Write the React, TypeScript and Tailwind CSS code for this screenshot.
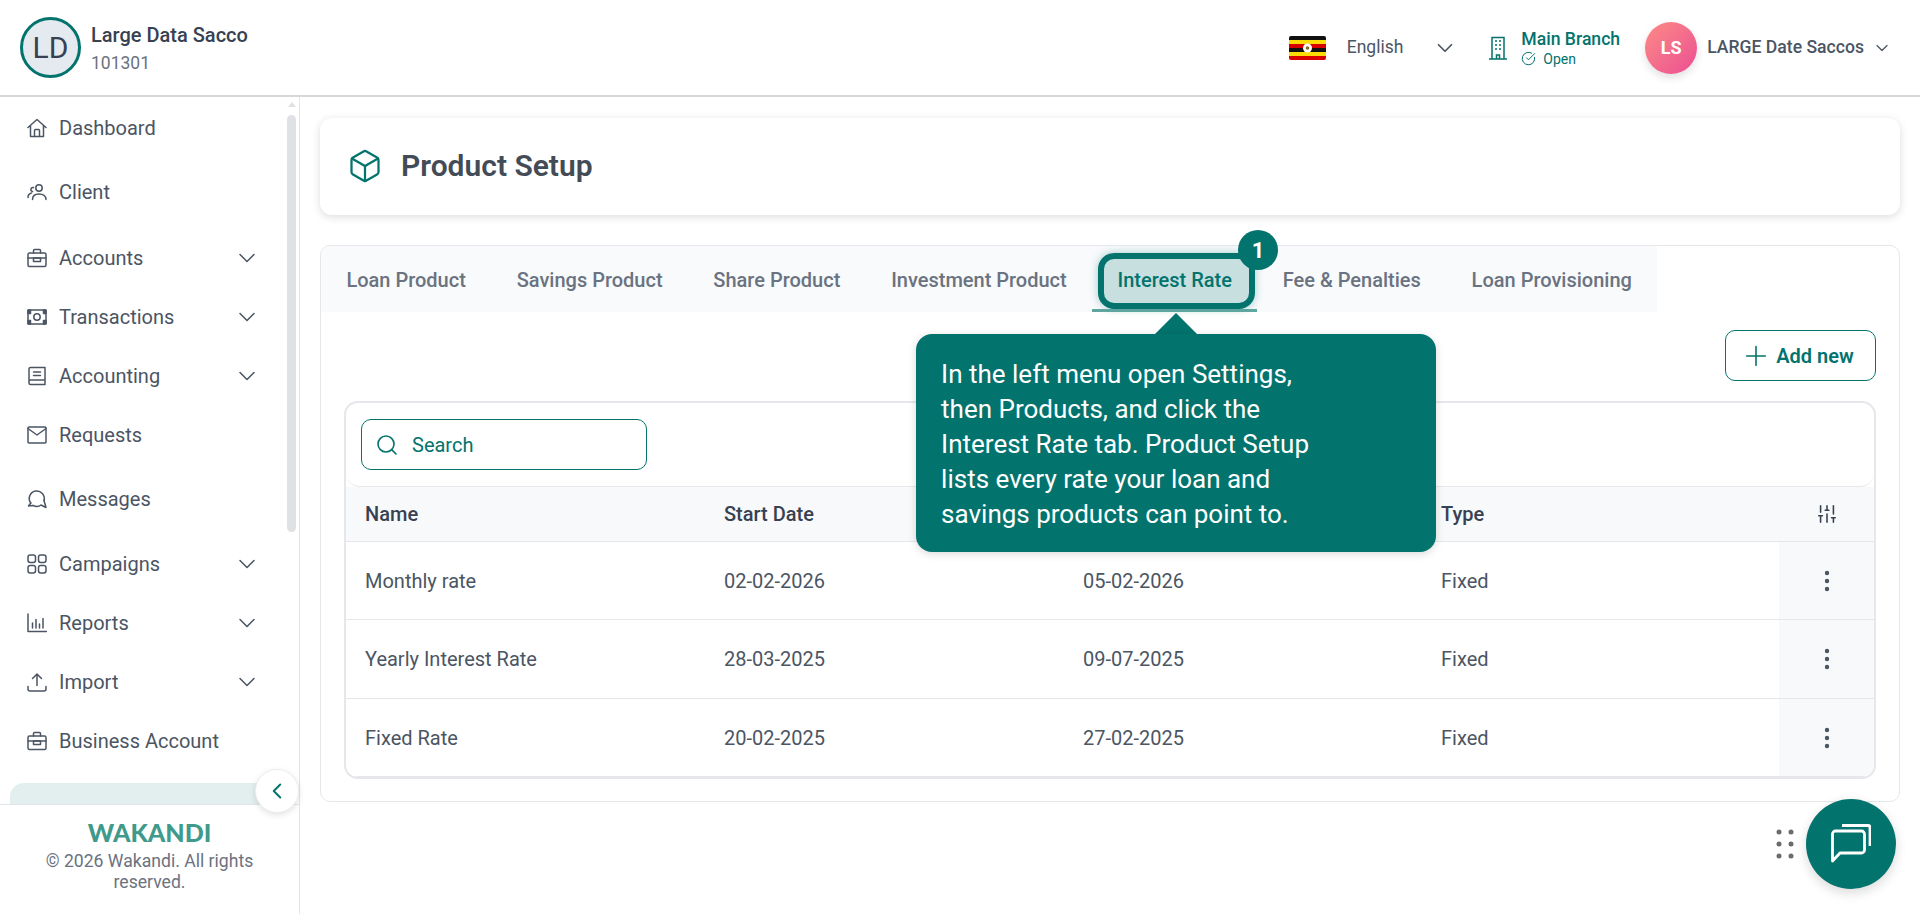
import type { ReactNode } from 'react'
import { ChevronDown, ChevronLeft, CircleCheckBig, Box, Plus, Search, SlidersVertical } from 'lucide-react'

function NavIcon({ children }: { children: ReactNode }) {
  return (
    <svg width="20" height="20" viewBox="0 0 20 20" fill="none" stroke="currentColor" strokeWidth="1.5" strokeLinejoin="round" strokeLinecap="round">
      {children}
    </svg>
  )
}

const briefcase = (
  <NavIcon>
    <rect x="1" y="5" width="18" height="13.500" rx="1.500" />
    <path d="M6.500 5V2.500a1 1 0 0 1 1-1h5a1 1 0 0 1 1 1V5M1 10h18" />
    <rect x="6.500" y="10" width="7" height="3.500" />
  </NavIcon>
)

const navItems = [
  {
    label: 'Dashboard',
    cls: 'h-[64px]',
    icon: (
      <NavIcon>
        <path d="M1 9.500 10 1.500l9 8M3.500 8v10.500h13V8" />
        <path d="M7.500 18.500v-6a1 1 0 0 1 1-1h3a1 1 0 0 1 1 1v6" />
      </NavIcon>
    ),
  },
  {
    label: 'Client',
    cls: 'h-[64px]',
    icon: (
      <NavIcon>
        <circle cx="12" cy="6" r="3.200" />
        <path d="M5.500 17.500c0-3.500 2.500-5.500 6.500-5.500s7 2 7 5.500" />
        <path d="M6.500 5.500a2 2 0 1 0-1 4M1 15.500c0-2.500 1-4 3.500-4.500" />
      </NavIcon>
    ),
  },
  { label: 'Accounts', cls: 'mt-[4px] h-[59px]', more: true, icon: briefcase },
  {
    label: 'Transactions',
    cls: 'h-[59px]',
    more: true,
    icon: (
      <NavIcon>
        <rect x="1" y="3" width="18" height="14" rx="1" />
        <circle cx="10" cy="10" r="3.200" />
        <path fill="currentColor" d="M1 6.500h2.500V3H1zM16.500 3v3.500H19V3zM1 13.500h2.500V17H1zM16.500 13.500V17H19v-3.500z" />
      </NavIcon>
    ),
  },
  {
    label: 'Accounting',
    cls: 'h-[59px]',
    more: true,
    icon: (
      <NavIcon>
        <path d="M2 15.500V3a1.500 1.500 0 0 1 1.500-1.500H18v17H3.500A1.500 1.500 0 0 1 2 17v-1.500A1.500 1.500 0 0 1 3.500 14H18" />
        <path d="M6.500 6h7M6.500 9.500h7" />
      </NavIcon>
    ),
  },
  {
    label: 'Requests',
    cls: 'h-[60px]',
    icon: (
      <NavIcon>
        <rect x="1" y="2" width="18" height="16" rx="1" />
        <path d="M1 3.500l9 6.500 9-6.500" />
      </NavIcon>
    ),
  },
  {
    label: 'Messages',
    cls: 'mt-[2px] h-[64px]',
    icon: (
      <NavIcon>
        <path d="M3.800 14A7.500 7.500 0 1 1 17 11.500" />
        <path d="M3.800 14 1.500 17l4.500-.5" />
        <path d="M6 16.500c3 1.500 6 1.200 8-.5l5 2.500-2-7" />
      </NavIcon>
    ),
  },
  {
    label: 'Campaigns',
    cls: 'mt-[3px] h-[59px]',
    more: true,
    icon: (
      <NavIcon>
        <rect x="1" y="1" width="7.500" height="7.500" rx="2.200" />
        <rect x="11.500" y="1" width="7.500" height="7.500" rx="2.200" />
        <rect x="1" y="11.500" width="7.500" height="7.500" rx="2.200" />
        <rect x="11.500" y="11.500" width="7.500" height="7.500" rx="2.200" />
      </NavIcon>
    ),
  },
  {
    label: 'Reports',
    cls: 'h-[59px]',
    more: true,
    icon: (
      <NavIcon>
        <path d="M1 1v17.500h18.500" />
        <path d="M5.500 15v-5M9 15V6.500M12.500 15v-4M16 15V5.500" />
      </NavIcon>
    ),
  },
  {
    label: 'Import',
    cls: 'h-[60px]',
    more: true,
    icon: (
      <NavIcon>
        <path d="M10 13.500V2M5.500 6.500 10 2l4.500 4.500" />
        <path d="M1 14.500v2.500a2 2 0 0 0 2 2h14a2 2 0 0 0 2-2v-2.500" />
      </NavIcon>
    ),
  },
  { label: 'Business Account', cls: 'h-[58px]', icon: briefcase },
]

const tabs = ['Loan Product', 'Savings Product', 'Share Product', 'Investment Product', 'Interest Rate', 'Fee & Penalties', 'Loan Provisioning']

const rows = [
  { name: 'Monthly rate', start: '02-02-2026', end: '05-02-2026', cls: 'h-[78px]' },
  { name: 'Yearly Interest Rate', start: '28-03-2025', end: '09-07-2025', cls: 'h-[79px]' },
  { name: 'Fixed Rate', start: '20-02-2025', end: '27-02-2025', cls: 'h-[78px]' },
]

function UgandaFlag() {
  return (
    <svg width="37" height="24" viewBox="0 0 37 24" className="rounded-[2px]">
      <rect width="37" height="4" y="0" fill="#111" />
      <rect width="37" height="4" y="4" fill="#fcdc04" />
      <rect width="37" height="4" y="8" fill="#d90000" />
      <rect width="37" height="4" y="12" fill="#111" />
      <rect width="37" height="4" y="16" fill="#fcdc04" />
      <rect width="37" height="4" y="20" fill="#d90000" />
      <circle cx="18.500" cy="12" r="4.500" fill="#fff" />
      <circle cx="18.500" cy="12" r="1.800" fill="#8a6a2a" />
    </svg>
  )
}

function Sidebar() {
  return (
    <aside className="relative flex w-[300px] shrink-0 flex-col border-r border-[#e2e5e9]">
      <nav className="relative min-h-0 flex-1 overflow-hidden">
        {navItems.map((item) => (
          <div key={item.label} className={`flex items-center pb-[2px] pl-[27px] pr-[38px] text-[20px] text-[#4b5563] ${item.cls}`}>
            {item.icon}
            <span className="ml-[12px] flex-1">{item.label}</span>
            {item.more && <ChevronDown size={28} strokeWidth={1.3} />}
          </div>
        ))}
        <div className="ml-[10px] mr-[20px] mt-[12px] h-[60px] rounded-t-[14px] bg-[#e3eeee]" />
        {/* scrollbar */}
        <div className="absolute right-[3px] top-[18px] h-[417px] w-[9px] rounded-full bg-[#dfe1e4]" />
        <div className="absolute right-[3px] top-[5px] h-0 w-0 border-x-[4px] border-b-[5px] border-x-transparent border-b-[#dfe1e4]" />
      </nav>
      <button className="absolute left-[255px] top-[672px] z-10 flex h-[44px] w-[44px] items-center justify-center rounded-full border border-[#eceef0] bg-white text-[#03736d] shadow-[0_2px_6px_rgba(0,0,0,0.12)]">
        <ChevronLeft size={26} strokeWidth={1.8} />
      </button>
      <footer className="flex h-[110px] shrink-0 flex-col items-center border-t border-[#e2e5e9] pt-[14px]">
        <div className="font-['Lato',sans-serif] text-[25px] font-black leading-[26px] text-[#3f9a8b]">WAKANDI</div>
        <p className="mt-[6px] w-[250px] text-center text-[17.6px] leading-[21px] text-[#6b7280]">© 2026 Wakandi. All rights reserved.</p>
      </footer>
    </aside>
  )
}

function Tab({ label }: { label: string }) {
  if (label !== 'Interest Rate') {
    return <div className="flex h-[66px] items-center px-[25.4px] pt-[2px] text-[20px] font-medium text-[#6b7280]">{label}</div>
  }
  return (
    <div className="relative flex h-[66px] items-center px-[25.4px] pt-[2px] text-[20px] font-medium text-[#03736d]">
      <span className="relative z-10">{label}</span>
      <div className="absolute bottom-[3px] left-[6px] right-[2px] top-[7px] rounded-[16px] border-[6px] border-[#03736d] bg-[#03736d]/20 shadow-[0_0_8px_rgba(3,115,109,0.35)]" />
      <div className="absolute bottom-0 left-0 right-0 h-[3px] bg-[#5fa5a0]" />
      <div className="absolute left-[146px] top-[-16px] z-20 flex h-[40px] w-[40px] items-center justify-center rounded-full bg-[#03736d] text-[22px] font-bold text-white">1</div>
      {/* coach mark */}
      <div className="absolute left-[62px] top-[67px] z-20 h-0 w-0 border-x-[22px] border-b-[22px] border-x-transparent border-b-[#03736d]" />
      <div className="absolute left-[-176px] top-[88px] z-20 w-[520px] rounded-[16px] bg-[#03736d] pb-[20px] pl-[25px] pr-[25px] pt-[23px] text-[26px] font-normal leading-[35px] text-white shadow-[0_2px_8px_rgba(0,0,0,0.15)]">
        In the left menu open Settings,<br />
        then Products, and click the<br />
        Interest Rate tab. Product Setup<br />
        lists every rate your loan and<br />
        savings products can point to.
      </div>
    </div>
  )
}

function RatesTable() {
  return (
    <div className="mt-[20px] overflow-hidden rounded-[14px] border-[2px] border-[#e5e7eb]">
      <div className="flex h-[84px] items-center rounded-b-[14px] border-b border-[#e5e7eb] pl-[15px]">
        <div className="flex h-[51px] w-[286px] items-center rounded-[10px] border border-[#03736d] pl-[13px] text-[20px] text-[#03736d]">
          <Search size={24} strokeWidth={1.6} />
          <span className="ml-[13px]">Search</span>
        </div>
      </div>
      <div className="grid h-[55px] grid-cols-[378px_359px_358px_1fr_95px] items-center border-b border-[#e5e7eb] bg-[#f7f9fb] text-[20px] font-medium text-[#374151]">
        <div className="pl-[19px]">Name</div>
        <div>Start Date</div>
        <div>End Date</div>
        <div>Type</div>
        <div className="flex justify-center"><SlidersVertical size={22} strokeWidth={1.7} /></div>
      </div>
      {rows.map((row) => (
        <div key={row.name} className={`grid grid-cols-[378px_359px_358px_1fr_95px] items-center border-b border-[#e5e7eb] text-[20px] text-[#4b5563] ${row.cls}`}>
          <div className="pl-[19px]">{row.name}</div>
          <div>{row.start}</div>
          <div>{row.end}</div>
          <div>Fixed</div>
          <div className="flex h-full items-center justify-center bg-[#f7f9fb] text-[#4b5563]">
            <svg width="6" height="22" viewBox="0 0 6 22" fill="currentColor">
              <circle cx="3" cy="3" r="2.200" /><circle cx="3" cy="11" r="2.200" /><circle cx="3" cy="19" r="2.200" />
            </svg>
          </div>
        </div>
      ))}
    </div>
  )
}

export default function App() {
  return (
    <div className="relative flex h-screen flex-col overflow-hidden bg-white font-['Roboto',sans-serif]">
      <header className="flex h-[97px] shrink-0 items-center justify-between border-b-[2px] border-[#d6d8db] pl-[20px] pr-[28px]">
        <div className="flex items-center">
          <div className="flex h-[61px] w-[61px] items-center justify-center rounded-full border-[3px] border-[#03736d] bg-[#e5e9f0] text-[30px] text-[#374151]">LD</div>
          <div className="ml-[10px]">
            <div className="text-[20px] font-medium leading-[24px] text-[#374151]">Large Data Sacco</div>
            <div className="mt-[6px] text-[17.5px] leading-[20px] text-[#6b7280]">101301</div>
          </div>
        </div>
        <div className="flex items-center">
          <UgandaFlag />
          <span className="ml-[21px] text-[17.5px] text-[#4b5563]">English</span>
          <ChevronDown size={26} strokeWidth={1.6} className="ml-[29px] text-[#4b5563]" />
          <svg width="18" height="24" viewBox="0 0 18 24" fill="none" stroke="#03736d" strokeWidth="1.5" className="ml-[31px]">
            <path d="M3 23V1.500h12V23M0 23h18M7.500 23v-4h3v4" />
            <path d="M6 5h2M10 5h2M6 9h2M10 9h2M6 13h2M10 13h2" />
          </svg>
          <div className="ml-[14px] text-[#03736d]">
            <div className="text-[17.6px] font-medium leading-[20px]">Main Branch</div>
            <div className="mt-[2px] flex items-center text-[14px] leading-[16px]">
              <CircleCheckBig size={15} strokeWidth={1.6} />
              <span className="ml-[7px]">Open</span>
            </div>
          </div>
          <div className="ml-[25px] flex h-[52px] w-[52px] items-center justify-center rounded-full bg-gradient-to-br from-[#fb8a84] to-[#ec4c92] text-[18px] font-bold text-white shadow-[0_4px_8px_rgba(0,0,0,0.12)]">LS</div>
          <span className="ml-[10px] text-[17.6px] font-medium text-[#4b5563]">LARGE Date Saccos</span>
          <ChevronDown size={20} strokeWidth={1.5} className="ml-[8px] text-[#4b5563]" />
        </div>
      </header>

      <div className="flex min-h-0 flex-1">
        <Sidebar />
        <main className="min-w-0 flex-1 px-[20px] pt-[21px]">
          <section className="flex h-[97px] items-center rounded-[12px] pb-[2px] pl-[27px] shadow-[0_2px_8px_rgba(0,0,0,0.14)]">
            <Box size={36} strokeWidth={1.5} className="text-[#03736d]" />
            <h1 className="ml-[18px] text-[30px] font-semibold text-[#434c56]">Product Setup</h1>
          </section>

          <section className="mt-[30px] h-[557px] rounded-[10px] border border-[#e5e7eb]">
            <div className="flex w-fit rounded-tl-[10px] bg-[#f8fafc]">
              {tabs.map((tab) => <Tab key={tab} label={tab} />)}
            </div>
            <div className="px-[23px] pt-[18px]">
              <div className="flex justify-end">
                <button className="flex h-[51px] w-[151px] items-center justify-center rounded-[10px] border border-[#03736d] pr-[7px] text-[20px] font-semibold text-[#03736d]">
                  <Plus size={32} strokeWidth={1.2} />
                  <span className="ml-[4px]">Add new</span>
                </button>
              </div>
              <RatesTable />
            </div>
          </section>
        </main>
      </div>

      <div className="absolute bottom-[25px] right-[24px] flex items-center">
        <svg width="18" height="30" viewBox="0 0 18 30" fill="#6b6b6b" className="mr-[12px]">
          <circle cx="3" cy="3" r="2.500" /><circle cx="15" cy="3" r="2.500" />
          <circle cx="3" cy="15" r="2.500" /><circle cx="15" cy="15" r="2.500" />
          <circle cx="3" cy="27" r="2.500" /><circle cx="15" cy="27" r="2.500" />
        </svg>
        <div className="flex h-[90px] w-[90px] items-center justify-center rounded-full bg-[#03736d] shadow-[0_4px_12px_rgba(0,0,0,0.15)]">
          <svg width="40" height="40" viewBox="0 0 40 40" fill="none" stroke="#fff" strokeWidth="2.800" strokeLinejoin="round">
            <path d="M1.500 37V10a3 3 0 0 1 3-3h26a3 3 0 0 1 3 3v16a3 3 0 0 1-3 3H9z" />
            <path d="M11 1.500h26a2 2 0 0 1 2 2V22" />
          </svg>
        </div>
      </div>
    </div>
  )
}
